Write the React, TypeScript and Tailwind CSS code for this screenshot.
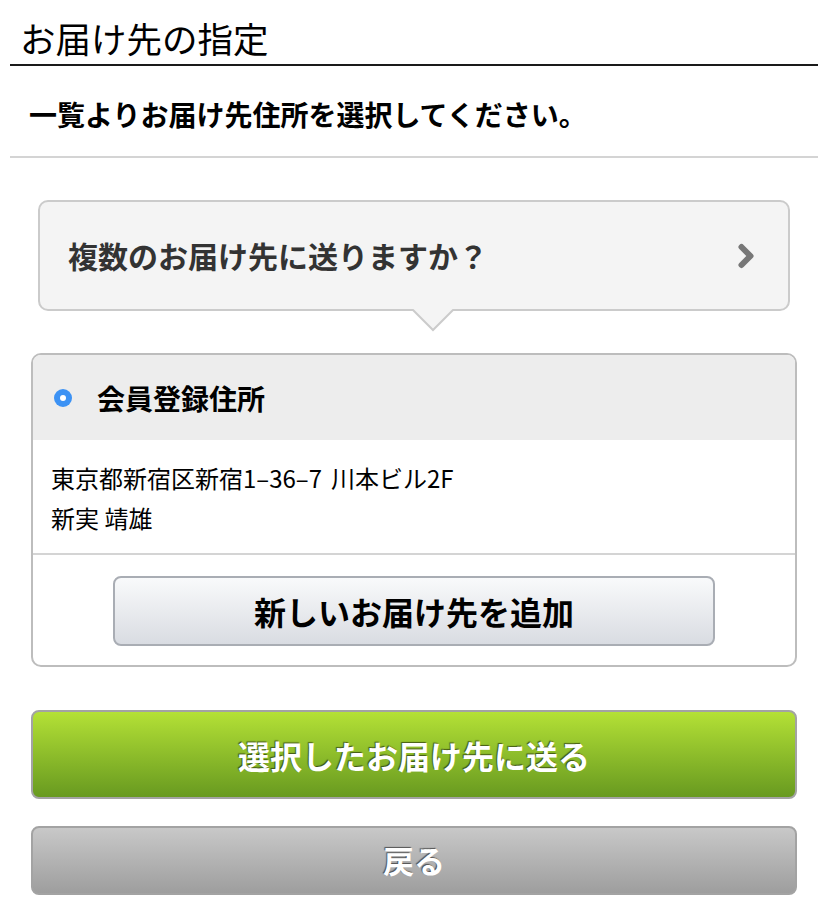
import { ChevronRight } from 'lucide-react';

const address = {
  label: '会員登録住所',
  street: '東京都新宿区新宿1–36–7',
  building: '川本ビル2F',
  name: '新実 靖雄',
};

export default function App() {
  return (
    <div className="w-[828px] min-h-[920px] bg-white font-['Noto_Sans_CJK_JP','Noto_Sans',sans-serif] text-black">
      <div className="mx-[10px] border-b-2 border-[#1a1a1a] pt-[20px] pb-[8px] pl-[10px]">
        <h1 className="text-[35.5px] leading-[36px] font-normal">お届け先の指定</h1>
      </div>

      <div className="mx-[10px] border-b-2 border-[#d4d4d4] pt-[33px] pb-[26px] pl-[19px]">
        <p className="text-[28px] leading-[31px] font-bold">一覧よりお届け先住所を選択してください。</p>
      </div>

      <div className="px-[31px] pt-[42px]">
        <div className="relative mx-[7px]">
          <div className="flex h-[111px] items-center justify-between rounded-[10px] border-2 border-[#cbcbcb] bg-[#f4f4f4] pl-[28px] pr-[24px]">
            <span className="text-[30px] font-bold text-[#333]">複数のお届け先に送りますか？</span>
            <ChevronRight className="h-[36px] w-[36px] text-[#777]" strokeWidth={4} />
          </div>
          <svg
            className="absolute left-[373px] top-full -mt-[2px]"
            width="44"
            height="23"
            viewBox="0 0 44 23"
          >
            <path d="M1 0 L22 21 L43 0 Z" fill="#f4f4f4" />
            <path d="M1 0 L22 21 L43 0" fill="none" stroke="#cbcbcb" strokeWidth="2" />
          </svg>
        </div>

        <div className="mt-[42px] overflow-hidden rounded-[10px] border-2 border-[#bdbdbd]">
          <div className="flex h-[85px] items-center bg-[#ededed] pl-[21px]">
            <span className="flex h-[18px] w-[18px] items-center justify-center rounded-full bg-[#3c92f4]">
              <span className="h-[6px] w-[6px] rounded-full bg-white" />
            </span>
            <span className="ml-[25px] text-[28px] font-bold">{address.label}</span>
          </div>
          <div className="pl-[18px] pt-[18px] pb-[15px] text-[24px] leading-[40px]">
            <p>
              {address.street}
              <span className="ml-[9px]">{address.building}</span>
            </p>
            <p>{address.name}</p>
          </div>
          <div className="border-t-2 border-[#d4d4d4] pt-[21px] pb-[19px]">
            <button className="mx-auto flex h-[70px] w-[602px] items-center justify-center rounded-[8px] border-2 border-[#a9adb4] bg-gradient-to-b from-[#f9fafb] to-[#d9dce2] text-[32px] font-bold">
              新しいお届け先を追加
            </button>
          </div>
        </div>

        <button className="mt-[43px] flex h-[89px] w-full items-center justify-center rounded-[8px] border-2 border-[#a3a3a3] bg-gradient-to-b from-[#b4e136] to-[#689a20] text-[32px] font-bold text-white [text-shadow:-1px_-1px_1px_rgba(0,0,0,0.55)]">
          選択したお届け先に送る
        </button>

        <button className="mt-[27px] flex h-[69px] w-full items-center justify-center rounded-[8px] border-2 border-[#a3a3a3] bg-gradient-to-b from-[#c8c8c8] to-[#9e9e9e] text-[31px] font-bold text-white [text-shadow:-1px_-1px_1px_rgba(0,0,0,0.55)]">
          戻る
        </button>
      </div>
    </div>
  );
}
